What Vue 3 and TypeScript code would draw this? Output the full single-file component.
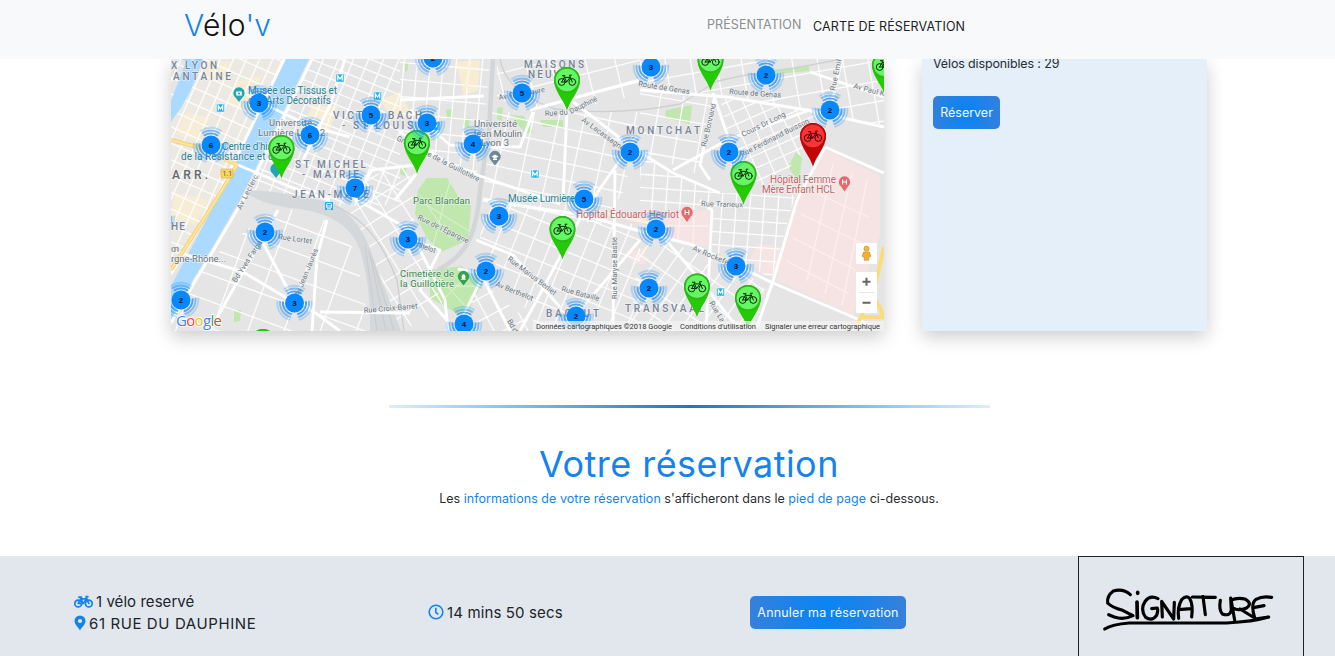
<script setup lang="ts">
interface Grid { id: string; area: string; cx: number; cy: number; angle: number; dx: number; dy: number }
interface Label { t: string; x: number; y: number; w: number; s: number; c: string; r?: number; wt?: number }

const range = (n: number): number[] => Array.from({ length: 2 * n + 1 }, (_, i) => i - n)

const grids: Grid[] = [
  { id: 'g1', area: '171,59 286,59 218,200 171,272', cx: 215, cy: 130, angle: 24, dx: 12, dy: 15 },
  { id: 'g2', area: '312,59 400,59 400,205 330,206 250,190', cx: 340, cy: 130, angle: 22, dx: 14, dy: 11 },
  { id: 'g3', area: '400,59 490,59 484,130 476,178 400,145', cx: 440, cy: 100, angle: 5, dx: 13, dy: 17 },
  { id: 'g4', area: '497,59 640,59 640,95 560,112 497,100', cx: 560, cy: 80, angle: -14, dx: 29, dy: 21 },
  { id: 'g5', area: '490,112 640,112 625,190 600,225 483,200', cx: 550, cy: 160, angle: 12, dx: 25, dy: 17 },
  { id: 'g6', area: '483,200 640,225 640,331 540,331 480,240', cx: 550, cy: 245, angle: 22, dx: 17, dy: 19 },
  { id: 'g7', area: '640,92 715,98 700,175 640,153', cx: 680, cy: 120, angle: 10, dx: 23, dy: 19 },
  { id: 'g8', area: '720,98 800,110 830,115 780,180 740,193', cx: 760, cy: 140, angle: -24, dx: 15, dy: 12 },
  { id: 'g9', area: '640,59 884,59 884,125 720,97 640,90', cx: 770, cy: 80, angle: -10, dx: 25, dy: 20 },
  { id: 'g10', area: '640,155 720,193 795,195 772,278 712,250 712,210 640,210', cx: 735, cy: 220, angle: 4, dx: 14, dy: 13 },
  { id: 'g11', area: '171,290 278,205 325,220 355,250 370,331 171,331', cx: 270, cy: 270, angle: 20, dx: 34, dy: 25 },
  { id: 'g12', area: '340,190 410,160 415,240 445,310 400,331 385,300', cx: 380, cy: 240, angle: -32, dx: 19, dy: 19 },
  { id: 'g13', area: '640,240 700,250 765,285 755,331 630,331', cx: 690, cy: 290, angle: 35, dx: 15, dy: 21 },
  { id: 'g14', area: '480,280 540,331 460,331', cx: 500, cy: 310, angle: -28, dx: 15, dy: 20 },
]

const majorRoads: string[] = [
  'M312 59L243 200L190 290L171 323', 'M284 59L216 200L171 274', 'M238 165L293 188L330 200', 'M262 103L310 126L350 137',
  'M278 210L260 243L227 300L210 331', 'M327 220L317 257L312 331', 'M320 312L410 313', 'M263 243L291 295L340 331',
  'M476 240L513 255L560 307', 'M582 215L553 270L520 331', 'M483 200L583 215L647 233L693 245L773 283L853 317L873 327',
  'M400 132L443 160L480 176L560 204', 'M567 110L563 200', 'M567 110L549 59', 'M636 137L597 193L582 220', 'M530 110L640 80',
  'M640 90L727 97L807 110L884 127', 'M567 97L630 146L673 173L720 193', 'M673 170L727 140L810 110', 'M715 95L700 165L710 180',
  'M713 93L730 143L740 193', 'M842 59L830 110', 'M810 72L884 97', 'M825 147L884 173', 'M825 147L797 200L773 281L757 327',
  'M615 170L613 331', 'M345 59L330 105L303 160', 'M400 100L484 96', 'M410 110L450 145L484 146L520 147L533 112', 'M416 174L395 200',
  'M400 235L440 250L420 290L447 320', 'M458 269L484 274L462 318', 'M484 280L510 331', 'M340 190L410 230L445 300L448 331',
  'M640 240L600 287L570 320', 'M666 240L700 280L740 331', 'M360 190L372 170L416 165', 'M700 200L712 210L706 331', 'M171 250L243 272L290 300',
]

const greens: string[] = [
  '418,190 427,178 447,178 458,196 471,206 468,240 441,252 427,238 415,214', '430,270 462,266 482,284 465,318 430,298',
  '666,110 692,105 690,124 665,118', '788,167 796,152 802,158 799,182', '510,115 524,116 533,132 526,134', '497,108 503,107 502,121 497,119',
  '446,110 452,109 452,120 447,119', '463,119 470,118 469,128 463,126', '540,120 563,120 563,127 543,127', '771,70 809,65 809,71 775,74',
  '234,311 241,310 240,321 234,322', '401,168 407,164 405,176 400,174', '405,62 408,62 408,70 405,72',
]
const pinks: string[] = ['799,188 827,150 880,176 880,235 853,316 776,280', '665,213 711,210 708,247 664,238', '756,244 780,246 787,268 765,275 749,261', '630,252 645,247 645,264 632,264']

const dark = '#66737e', district = '#78849a', teal = '#298395', red = '#c76468', park = '#368747'
const labels: Label[] = [
  { t: 'X LYON', x: 171, y: 69, w: 46, s: 10, c: district, wt: 500 }, { t: 'ANTAINE', x: 173, y: 80, w: 58, s: 10, c: district, wt: 500 },
  { t: 'Musée des Tissus et', x: 248, y: 94, w: 89, s: 10, c: teal }, { t: 'des Arts Décoratifs', x: 248, y: 104, w: 83, s: 10, c: teal },
  { t: 'Université', x: 269, y: 126, w: 43, s: 9.5, c: dark }, { t: 'Lumière Lyon 2', x: 258, y: 136, w: 67, s: 9.5, c: dark },
  { t: 'VICTOR BACH', x: 333, y: 119, w: 89, s: 10, c: district, wt: 500 }, { t: '- ST LOUIS', x: 342, y: 129, w: 71, s: 10, c: district, wt: 500 },
  { t: "Centre d'histoire", x: 222, y: 150, w: 70, s: 10, c: teal }, { t: 'de la Résistance et de', x: 181, y: 160, w: 98, s: 10, c: teal },
  { t: 'ST MICHEL', x: 295, y: 168, w: 71, s: 10, c: district, wt: 500 }, { t: '- MAIRIE', x: 302, y: 178, w: 57, s: 10, c: district, wt: 500 },
  { t: 'JEAN-MACE', x: 292, y: 198, w: 77, s: 10, c: district, wt: 500 }, { t: 'ARR.', x: 172, y: 179, w: 36, s: 12, c: '#606773', wt: 500 },
  { t: 'MAISONS', x: 524, y: 68, w: 60, s: 10, c: district, wt: 500 }, { t: 'NEUVES', x: 528, y: 78, w: 48, s: 10, c: district, wt: 500 },
  { t: 'Université', x: 474, y: 127, w: 43, s: 9.5, c: dark }, { t: 'Jean Moulin', x: 471, y: 137, w: 51, s: 9.5, c: dark }, { t: 'Lyon 3', x: 481, y: 146, w: 28, s: 9.5, c: dark },
  { t: 'MONTCHAT', x: 626, y: 134, w: 74, s: 10, c: district, wt: 500 }, { t: 'Hôpital Femme', x: 770, y: 183, w: 66, s: 10, c: red }, { t: 'Mère Enfant HCL', x: 762, y: 193, w: 73, s: 10, c: red },
  { t: 'Parc Blandan', x: 413, y: 204, w: 57, s: 9.5, c: park }, { t: 'Musée Lumière', x: 508, y: 202, w: 67, s: 10, c: teal }, { t: 'Hôpital Édouard Herriot', x: 576, y: 218, w: 103, s: 10, c: red },
  { t: 'Cimetière de', x: 400, y: 277, w: 54, s: 9.5, c: park }, { t: 'la Guillotière', x: 400, y: 287, w: 54, s: 9.5, c: park },
  { t: 'BACHUT', x: 546, y: 317, w: 53, s: 10, c: district, wt: 500 }, { t: 'TRANSVAAL', x: 625, y: 312, w: 79, s: 10, c: district, wt: 500 },
  { t: 'HE', x: 171, y: 230, w: 14, s: 10, c: district, wt: 500 }, { t: 'on', x: 171, y: 252, w: 8, s: 9.5, c: dark }, { t: 'rgne-Rhône...', x: 171, y: 262, w: 55, s: 9.5, c: dark },
  { t: 'Route de Genas', x: 638, y: 86, w: 52, s: 7.5, c: dark, r: 9 }, { t: 'Route de Genas', x: 729, y: 94, w: 52, s: 7.5, c: dark, r: 4 },
  { t: 'Cours Dr Long', x: 743, y: 137, w: 48, s: 7.5, c: dark, r: -26 }, { t: 'Rue Ferdinand Buisson', x: 742, y: 157, w: 76, s: 7.5, c: dark, r: -27 },
  { t: 'Rue Bonnand', x: 706, y: 147, w: 44, s: 7.5, c: dark, r: -77 }, { t: 'Rue Emile', x: 835, y: 91, w: 36, s: 7.5, c: dark, r: -78 }, { t: 'Av Paul K', x: 853, y: 88, w: 32, s: 7.5, c: dark, r: 15 },
  { t: 'Av Lacassagne', x: 581, y: 121, w: 51, s: 7.5, c: dark, r: 36 }, { t: 'Rue du', x: 545, y: 116, w: 23, s: 7.5, c: dark, r: -4 }, { t: 'Dauphiné', x: 571, y: 114, w: 30, s: 7.5, c: dark, r: -27 },
  { t: 'Av Félix Faure', x: 499, y: 100, w: 47, s: 7.5, c: dark, r: -10 }, { t: 'Grande Rue de la Guillotière', x: 396, y: 140, w: 92, s: 7.5, c: dark, r: 27 },
  { t: 'Av Leclerc', x: 241, y: 210, w: 38, s: 7.5, c: dark, r: -63 }, { t: 'Rue Lortet', x: 278, y: 239, w: 34, s: 7.5, c: dark, r: 8 }, { t: 'Bd Yves Farge', x: 236, y: 283, w: 48, s: 7.5, c: dark, r: -57 },
  { t: 'Av Jean Jaurès', x: 299, y: 297, w: 51, s: 7.5, c: dark, r: -68 }, { t: 'Rue Croix-Barret', x: 364, y: 313, w: 54, s: 7.5, c: dark, r: -5 },
  { t: "Rue de l'Épargne", x: 417, y: 219, w: 56, s: 7.5, c: dark, r: 26 }, { t: 'Av Berthelot', x: 399, y: 240, w: 38, s: 7.5, c: dark, r: 20 }, { t: 'Av Berthelot', x: 495, y: 286, w: 40, s: 7.5, c: dark, r: 22 },
  { t: 'Rue Marius Berliet', x: 507, y: 260, w: 59, s: 7.5, c: dark, r: 37 }, { t: 'Rue Bataille', x: 561, y: 291, w: 39, s: 7.5, c: dark, r: 15 }, { t: 'Rue Maryse Bastié', x: 617, y: 299, w: 62, s: 7.5, c: dark, r: -90 },
  { t: 'Rue Trarieux', x: 701, y: 206, w: 42, s: 7.5, c: dark, r: 2 }, { t: 'Av Rockefeller', x: 692, y: 250, w: 49, s: 7.5, c: dark, r: 23 }, { t: 'Rue La', x: 709, y: 303, w: 23, s: 7.5, c: dark, r: 59 },
  { t: 'Bd d', x: 507, y: 321, w: 14, s: 7.5, c: dark, r: 61 },
]

const clusters: [number, number, number][] = [
  [192, 44, 2], [259, 103, 3], [211, 145, 6], [310, 135, 6], [371, 115, 5], [427, 123, 3], [433, 58, 2], [473, 144, 4], [522, 93, 5],
  [355, 188, 7], [265, 232, 2], [181, 300, 2], [294.5, 303, 3], [408, 239, 3], [499, 216, 3], [486, 271, 2], [464, 324, 4], [576, 316, 2],
  [584, 199, 5], [656, 229, 2], [649, 288, 2], [736, 266, 3], [630, 152, 2], [651, 67, 3], [766, 75, 2], [830, 110, 2], [729, 152, 2], [157, 218, 2],
]
const pins: [number, number, boolean][] = [
  [281.5, 148, false], [417, 143, false], [567, 80, false], [710.5, 60, false], [885, 65, false], [743.5, 174, false],
  [562.5, 229, false], [697, 286.5, false], [748, 298, false], [263, 342, false], [813, 136, true],
]
const metros: [number, number][] = [[340, 78], [220.5, 108], [377.5, 96], [436, 126], [535, 174], [720.5, 292]]

const rad = (d: number): number => (d * Math.PI) / 180
function arc(r: number, a: number, b: number): string {
  return `M${r * Math.cos(rad(a))} ${r * Math.sin(rad(a))}A${r} ${r} 0 0 1 ${r * Math.cos(rad(b))} ${r * Math.sin(rad(b))}`
}
function ring(r: number): string {
  return arc(r, -128, -52) + arc(r, -8, 76) + arc(r, 104, 188)
}
</script>

<template>
  <div class="page">
    <header class="navbar">
      <a class="brand"><b>V</b>élo<b>'v</b></a>
      <nav>
        <a class="link">PRÉSENTATION</a>
        <a class="link active">CARTE DE RÉSERVATION</a>
      </nav>
    </header>

    <main>
      <section class="booking">
        <div class="map">
          <svg viewBox="171 59 713 272" width="713" height="272">
            <defs>
              <clipPath v-for="g in grids" :id="g.id" :key="g.id"><polygon :points="g.area" /></clipPath>
              <g id="bike" fill="none" stroke-linecap="round" stroke-linejoin="round">
                <circle cx="-5.3" cy="2" r="3.4" /><circle cx="5.3" cy="2" r="3.4" />
                <path d="M-5.3 2L-2.8-2.6H3L-.4 2H-5.3M-.4 2L-3.2-4.200M-4.600-4.300H-2M5.3 2L2.5-4.800H4.400" />
              </g>
            </defs>
            <rect x="171" y="59" width="713" height="272" fill="#e5e5e5" />
            <polygon points="203,59 284,59 222,188 171,268 171,120" fill="#ece9e2" />
            <polygon points="208,62 232,62 222,82 204,78" fill="#f7ecd4" />
            <polygon points="235,82 262,76 248,112 228,105" fill="#f7ecd4" />
            <polygon points="186,112 210,118 196,141 176,134" fill="#f7ecd4" />
            <polygon points="312,105 338,107 328,135 304,125" fill="#f7ecd4" />
            <polygon points="456,62 480,60 478,90 464,96" fill="#f8ecd2" />
            <polygon points="380,100 400,92 412,115 393,121" fill="#f7ecd4" />
            <polygon points="175,193 208,200 195,225 171,218" fill="#f7ecd4" />
            <polygon v-for="p in pinks" :key="p" :points="p" fill="#f6e3e3" />
            <polygon v-for="p in greens" :key="p" :points="p" fill="#c0e8ae" />
            <g stroke="#fdfdfd" stroke-width="1.3">
              <g v-for="g in grids" :key="g.id" :clip-path="`url(#${g.id})`">
                <g :transform="`translate(${g.cx} ${g.cy}) rotate(${g.angle})`">
                  <path v-for="i in range(12)" :key="`v${i}`" :d="`M${i * g.dx} -170V170`" />
                  <path v-for="i in range(12)" :key="`h${i}`" :d="`M-170 ${i * g.dy}H170`" />
                </g>
              </g>
            </g>
            <path d="M247 190Q285 191 335 204Q363 222 373 258Q380 276 401 331H370Q371 285 360 250Q348 216 300 209Q270 207 247 194Z" fill="#d5d8da" />
            <path d="M365 245L377 331M369 250L386 331M372 258L394 331M335 206Q375 222 397 280L404 331" fill="none" stroke="#c9cdd0" stroke-width="1.2" />
            <path d="M493 59L489 130L480 190Q478 220 470 238Q462 257 438 270" fill="none" stroke="#d3d6d9" stroke-width="4.500" />
            <path d="M500 59Q506 92 555 109Q620 116 680 104Q700 92 715 82Q744 74 790 69L842 59" fill="none" stroke="#cdd1d3" stroke-width="1.4" />
            <path d="M187 59H203Q192 95 171 122V101Z" fill="#aadaff" />
            <path d="M286 59H309L240 200L188 289L171 320V286L217 200L255 123Z" fill="#aadaff" />
            <g fill="none" stroke="#fff" stroke-width="2.9" stroke-linejoin="round">
              <path v-for="d in majorRoads" :key="d" :d="d" />
            </g>
            <path d="M425 204L469 231M420 195L450 238M450 181L433 246M434 272L468 309M470 273L440 303M433 286H477" fill="none" stroke="#e1f2d5" stroke-width="1" />
            <path d="M806 188L868 217M801 214L863 244M793 238L856 270M787 261L849 294M833 164L807 281M852 173L825 294M867 180L842 306M680 213L678 240M694 212L693 244M666 226H708" fill="none" stroke="#fbf0ef" stroke-width="1.3" />
            <path d="M171 140L197 147L238 165M237 165L216 200L171 270" fill="none" stroke="#f3cf72" stroke-width="4" />
            <path d="M171 140L197 147L238 165M237 165L216 200L171 270" fill="none" stroke="#ffe49b" stroke-width="2.2" />
            <path d="M884 247L874 290L856 327M876 300L884 317M862 317H884" fill="none" stroke="#fbdc79" stroke-width="4" />
            <path d="M566 204L650 223M470 60L466 88" fill="none" stroke="#fbf3dc" stroke-width="3" />
            <rect x="221" y="169" width="12" height="9" rx="1" fill="#f8d568" stroke="#d9ab3e" stroke-width=".6" />
            <text x="222.500" y="176.200" font-size="7" fill="#715518">1.1</text>

            <g class="halo">
              <text v-for="(l, i) in labels" :key="i" :x="l.x" :y="l.y" :font-size="l.s" :fill="l.c" :font-weight="l.wt ?? 400" :textLength="l.w" :transform="l.r ? `rotate(${l.r} ${l.x} ${l.y})` : undefined">{{ l.t }}</text>
            </g>

            <g v-for="m in metros" :key="m.join()" :transform="`translate(${m[0]} ${m[1]})`">
              <rect x="-4" y="-4" width="8" height="8" fill="#1fb1e8" stroke="#fff" stroke-width=".5" />
              <path d="M-2.2 2.4V-2.3L0 1L2.2-2.3V2.4" fill="none" stroke="#fff" stroke-width="1.2" />
            </g>
            <g transform="translate(329 206)">
              <rect x="-4" y="-4" width="8" height="8" fill="#1fb1e8" /><rect x="-2.3" y="-2.6" width="4.6" height="4.6" rx="1" fill="none" stroke="#fff" stroke-width="1" /><path d="M-2 0H2M-2 3H2" stroke="#fff" stroke-width=".8" />
            </g>
            <path d="M239 102L235.500 97.500A5.700 5.700 0 1 1 242.500 97.500Z" fill="#22a6b3" />
            <rect x="236.200" y="91.500" width="5.600" height="4" fill="#fff" /><circle cx="239" cy="93.500" r="1.100" fill="#22a6b3" />
            <path d="M276 178L272.500 173.500A5.700 5.700 0 1 1 279.500 173.500Z" fill="#22a6b3" />
            <path d="M495 165.500L491.500 161A5.700 5.700 0 1 1 498.500 161Z" fill="#6f8794" />
            <path d="M491.500 156.500L495 154.500L498.500 156.500L495 158.500ZM493 158.500V160H497V158.500" fill="#fff" />
            <path d="M463.500 285.500L460 281A5.700 5.700 0 1 1 467 281Z" fill="#37a051" />
            <path d="M461 279.500H466M462 278.500V275.500Q463.500 273.500 465 275.500V278.500Z" fill="#fff" stroke="#fff" stroke-width=".7" />
            <g v-for="h in [[687, 212.500], [844.500, 182]]" :key="h[0]" :transform="`translate(${h[0]} ${h[1]})`">
              <path d="M0 9.500L-3.500 4.500A5.700 5.700 0 1 1 3.500 4.500Z" fill="#e5696c" />
              <path d="M-1.900-2.600V2.600M1.900-2.600V2.600M-1.900 0H1.900" stroke="#fff" fill="none" />
            </g>

            <g v-for="(p, i) in pins" :key="`p${i}`" :transform="`translate(${p[0]} ${p[1]})`">
              <path d="M0 30.500C-3 20-13 11-13 0A13 13 0 1 1 13 0C13 11 3 20 0 30.500Z" :fill="p[2] ? '#c50505' : '#24ca02'" />
              <circle r="12.300" fill="none" :stroke="p[2] ? '#a91218' : '#35ad2b'" stroke-width="1.300" />
              <circle r="11.300" :fill="p[2] ? '#fb3434' : '#65f663'" />
              <use href="#bike" :stroke="p[2] ? '#420404' : '#092c08'" stroke-width="1" />
            </g>

            <g v-for="(c, i) in clusters" :key="`c${i}`" :transform="`translate(${c[0]} ${c[1]})`">
              <g fill="none" stroke="#1c8ef7" stroke-width="1.900">
                <path :d="ring(11.600)" opacity=".75" /><path :d="ring(14.500)" opacity=".5" /><path :d="ring(17.300)" opacity=".25" />
              </g>
              <circle r="9.500" fill="#0788ff" />
              <text class="count" y="3" text-anchor="middle">{{ c[2] }}</text>
            </g>

            <rect x="533" y="321" width="351" height="10" fill="#f5f5f5" opacity=".7" />
            <g font-size="7.500" fill="#333">
              <text x="536" y="328.500" textLength="136">Données cartographiques ©2018 Google</text>
              <text x="680" y="328.500" textLength="76">Conditions d'utilisation</text>
              <text x="765" y="328.500" textLength="115">Signaler une erreur cartographique</text>
            </g>
            <text class="google" x="176" y="326" textLength="46"><tspan fill="#4285f4">G</tspan><tspan fill="#ea4335">o</tspan><tspan fill="#fbbc05">o</tspan><tspan fill="#4285f4">g</tspan><tspan fill="#34a853">l</tspan><tspan fill="#ea4335">e</tspan></text>
            <rect x="856" y="243" width="21" height="21" rx="1" fill="#fff" />
            <rect x="856" y="272" width="21" height="41" rx="1" fill="#fff" />
            <path d="M859 292.500H874" stroke="#e6e6e6" />
            <path d="M862.500 281.700H870.500M866.500 277.700V285.700M862.500 302.700H870.500" stroke="#666" stroke-width="2" />
            <circle cx="866.500" cy="248.700" r="2.600" fill="#f5b93c" stroke="#b97b21" stroke-width=".5" />
            <path d="M863.500 252H869.500L870.800 256.500L868.800 257V260.300H864.200V257L862.200 256.500Z" fill="#f2ae2e" stroke="#bd8024" stroke-width=".5" />
          </svg>
        </div>
        <aside class="station">
          <p>Vélos disponibles : 29</p>
          <button class="btn reserve">Réserver</button>
        </aside>
      </section>

      <div class="rule"></div>
      <h2>Votre réservation</h2>
      <p class="lead">Les <b>informations de votre réservation</b> s'afficheront dans le <b>pied de page</b> ci-dessous.</p>
    </main>

    <footer>
      <div class="details">
        <div class="row">
          <svg width="19" height="14" viewBox="-9.500 -7.500 19 14"><use href="#bike" stroke="#1583ec" stroke-width="1.700" /></svg>
          <span>1 vélo reservé</span>
        </div>
        <div class="row">
          <svg width="12" height="16" viewBox="0 0 12 16"><path fill="#1583ec" fill-rule="evenodd" d="M6 15.500C5 13 .5 9.500 .5 6A5.500 5.500 0 0 1 11.500 6C11.500 9.500 7 13 6 15.500ZM6 3.900A2.100 2.100 0 1 0 6 8.100A2.100 2.100 0 1 0 6 3.900Z" /></svg>
          <span class="address">61 RUE DU DAUPHINE</span>
        </div>
      </div>
      <div class="timer row">
        <svg width="16" height="16" viewBox="0 0 16 16" fill="none" stroke="#1583ec" stroke-width="1.600"><circle cx="8" cy="8" r="6.800" /><path d="M7.800 3.700V8.300L10.300 10.400" /></svg>
        <span class="time">14 mins 50 secs</span>
      </div>
      <button class="btn cancel">Annuler ma réservation</button>
      <div class="pad">
        <svg width="225" height="99" viewBox="57 36 675 297" fill="none" stroke="#000" stroke-width="9.500" stroke-linecap="round" stroke-linejoin="round">
          <path d="M211 149Q190 130 160 138Q140 153 143 174Q155 187 188 196L219 212Q190 226 163 216L146 209" />
          <path d="M231 171L232 218M233 142V145" stroke-width="11" />
          <path d="M294 161Q270 149 256 168Q239 193 257 217Q276 230 290 211Q295 197 292 189L275 191" />
          <path d="M307 216L305 169L341 222L343 172" />
          <path d="M356 220Q351 188 365 164Q379 150 389 160Q400 179 395 216M356 194L393 191" />
          <path d="M397 156L466 157M429 155L436 209" />
          <path d="M481 166Q476 195 487 207Q510 215 514 195L512 159M513 163L524 226M513 165Q535 156 557 163Q579 177 558 190Q537 198 523 191M540 192L579 216" />
          <path d="M635 157Q608 152 588 163Q570 176 585 222L626 216M584 187L612 182" />
          <path d="M134 252Q157 238 207 234L500 234Q580 230 623 217" />
        </svg>
      </div>
    </footer>
  </div>
</template>

<style>
body { margin: 0; overflow: hidden; background: #fff; }
</style>

<style scoped>
.page { width: 1335px; height: 656px; display: flex; flex-direction: column; overflow: hidden; background: #fff; color: #2b2e31; font: 400 16px/24px Inter, "Open Sans", sans-serif; white-space: nowrap; }
b { font-weight: inherit; color: #1583ec; }
p, h2 { margin: 0; }
.navbar { position: relative; z-index: 2; flex: none; height: 59px; box-sizing: border-box; padding-left: 184px; background: #f8f9fb; display: flex; }
.brand { width: 523px; font-size: 30px; font-weight: 300; line-height: 51px; letter-spacing: .2px; color: #111; }
nav { display: flex; gap: 11px; }
.link { width: 95px; color: #8c8d8e; font-size: 12.500px; line-height: 49px; letter-spacing: .08px; }
.link.active { width: 153px; color: #222; line-height: 53px; letter-spacing: .14px; }
main { flex: none; height: 497px; padding: 0 128px 0 171px; display: flex; flex-direction: column; align-items: center; }
.booking { width: 1036px; height: 272px; flex: none; display: flex; justify-content: space-between; }
.map, .station { box-shadow: 0 6px 17px rgba(0, 0, 0, .2); }
.map { width: 713px; height: 272px; }
.map svg { display: block; font-family: Roboto, sans-serif; }
.halo text { paint-order: stroke; stroke: #f3f3f3; stroke-width: 1.3px; stroke-opacity: .8; }
.count { font: bold 8px Arial, "Liberation Sans", sans-serif; fill: #07131f; }
.google { font: 500 15px "Open Sans", sans-serif; paint-order: stroke; stroke: #fff; stroke-width: 1.5px; }
.station { width: 285px; height: 272px; box-sizing: border-box; padding-left: 11px; background: #e4eff9; }
.station p { margin-top: -7px; font-size: 12.500px; letter-spacing: -.14px; }
.btn { display: block; border: 0; border-radius: 5px; padding: 0; height: 33px; color: #f4f9ff; font: 400 12.500px/34px Inter, "Open Sans", sans-serif; letter-spacing: 0; background: radial-gradient(circle, #0784f5 0%, #3480dc 95%); }
.reserve { width: 67px; margin-top: 20px; }
.rule { width: 601px; height: 3px; margin-top: 74px; flex: none; background: linear-gradient(90deg, #deedfb, #1478d2 50%, #deedfb); }
h2 { margin-top: 35px; font-size: 36px; line-height: 42px; font-weight: 400; color: #1583ec; letter-spacing: .45px; }
.lead { margin-top: 2px; font-size: 12.500px; }
.lead b { letter-spacing: .04px; }
footer { height: 100px; flex: none; box-sizing: border-box; background: #e1e7ed; padding-left: 74px; display: flex; color: #202428; font-size: 15px; }
.details { width: 354px; padding-top: 34px; }
.row { display: flex; align-items: center; gap: 3px; height: 22px; }
.row span { padding-top: 1px; letter-spacing: .05px; }
.row .address { letter-spacing: .6px; }
.row .time { letter-spacing: .13px; }
.timer { width: 322px; margin-top: 45px; }
.cancel { width: 156px; margin-top: 40px; margin-right: 172px; letter-spacing: .18px; }
.pad { width: 224px; height: 99px; border: 1px solid #1f2225; border-bottom: 0; }
.pad svg { display: block; }
</style>
